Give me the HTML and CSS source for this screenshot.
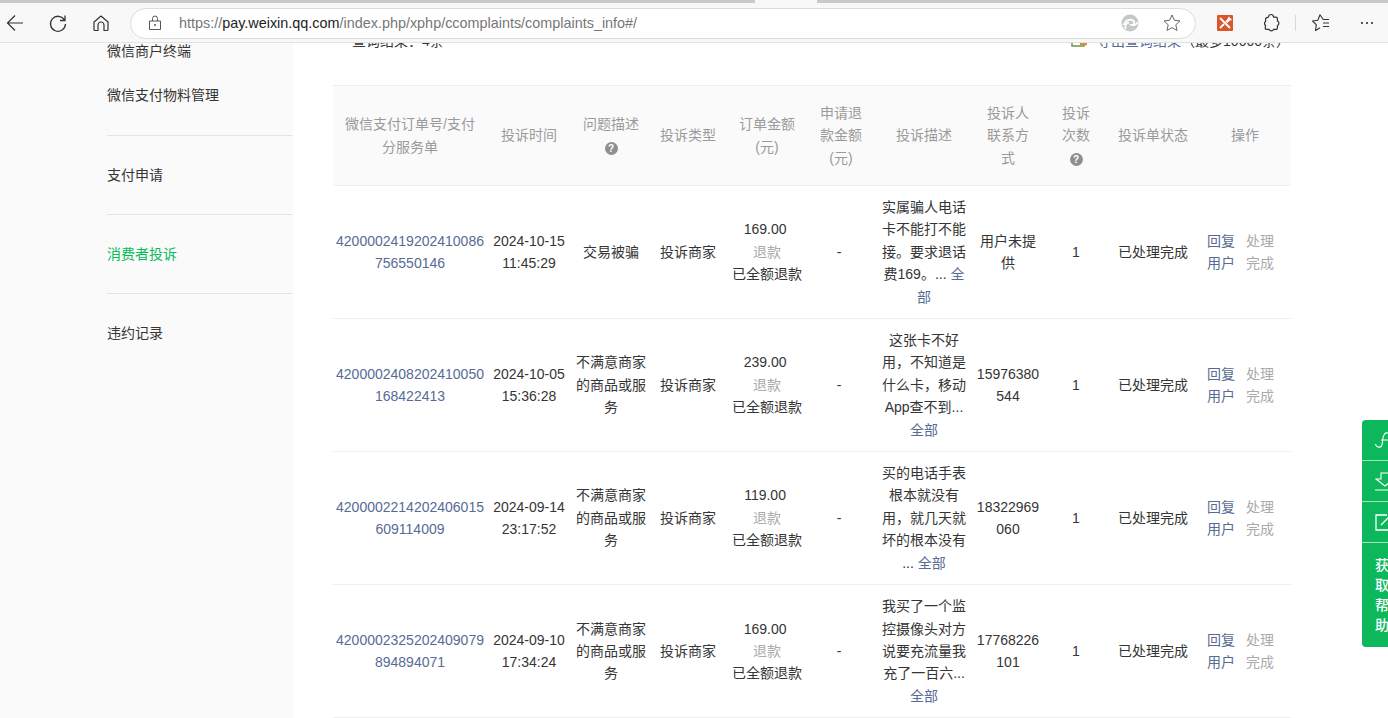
FILE: index.html
```html
<!DOCTYPE html>
<html lang="zh-CN">
<head>
<meta charset="utf-8">
<title>消费者投诉</title>
<link rel="stylesheet" href="styles.css">
</head>
<body>
<header class="browser">
  <div class="tabstrip"><span class="tab-notch"></span></div>
  <div class="toolbar">
    <button class="tb-btn back" aria-label="返回"><svg width="20" height="20" viewBox="0 0 20 20"><path d="M18 10H2.500M10 2.500 2.500 10l7.500 7.500" fill="none" stroke="#333" stroke-width="1.200"/></svg></button>
    <button class="tb-btn reload" aria-label="刷新"><svg width="20" height="20" viewBox="0 0 20 20"><path d="M16.500 7A7.500 7.500 0 1 0 17.500 11M17 2.500V7.500H12" fill="none" stroke="#333" stroke-width="1.300"/></svg></button>
    <button class="tb-btn home" aria-label="主页"><svg width="18" height="18" viewBox="0 0 18 18"><path d="M2 8 9 2l7 6v7.500a1 1 0 0 1-1 1h-3V11a3 3 0 0 0-6 0v5.500H3a1 1 0 0 1-1-1Z" fill="none" stroke="#333" stroke-width="1.200" stroke-linejoin="round"/></svg></button>
    <div class="urlbar">
      <svg class="lock" width="14" height="16" viewBox="0 0 14 16"><path d="M1.500 6h11v8.500h-11ZM4.500 6V3.500a2.500 2.500 0 0 1 5 0V6" fill="none" stroke="#555" stroke-width="1"/><circle cx="7" cy="10" r="1" fill="#555"/></svg>
      <span class="url"><span class="url-dim">https://</span><span class="url-host">pay.weixin.qq.com</span><span class="url-dim">/index.php/xphp/ccomplaints/complaints_info#/</span></span>
      <svg class="refresh-logo" width="18" height="18" viewBox="0 0 18 18"><circle cx="9" cy="9" r="8.500" fill="#c4c8c8"/><path d="M2.500 11C4 6 9 4.500 12 6.500c2 1.500 1.500 4-1 4.500 3 1 5-1 5-3M5 15c-2-3 0-6 3-6.500" fill="none" stroke="#fff" stroke-width="1.800"/></svg>
      <svg class="star" width="20" height="20" viewBox="0 0 20 20"><path d="m10 2 2.400 5.300 5.600.6-4.200 3.900 1.200 5.700L10 14.600l-5 2.900 1.200-5.700L2 7.900l5.600-.6Z" fill="none" stroke="#666" stroke-width="1" stroke-linejoin="round"/></svg>
    </div>
    <div class="ext ext-tool"><svg width="16" height="16" viewBox="0 0 16 16"><path d="M3 3l10 10M3 13 7 9M9 7l2-2 1-2 1.500 1.500-2 1-2 2" fill="none" stroke="#fff" stroke-width="1.800"/></svg></div>
    <button class="tb-btn puzzle" aria-label="扩展"><svg width="20" height="20" viewBox="0 0 20 20"><path d="M7.500 4a2.500 2.500 0 0 1 5 0c0 .6 2.500-.5 3.500.5s0 3.500.5 3.500a2.500 2.500 0 0 1 0 4.500c-.5 0 .5 2.500-.5 3.500s-3.500 0-3.500.5a2.500 2.500 0 0 1-4.500 0c0-.5-2.500.5-3.500-.5s.5-3 0-3.500a2.500 2.500 0 0 1 0-4c.5-.5-.5-2.500.5-3.500S7.500 4.500 7.500 4Z" fill="none" stroke="#333" stroke-width="1.200" stroke-linejoin="round"/></svg></button>
    <span class="tb-sep"></span>
    <button class="tb-btn favs" aria-label="收藏夹"><svg width="20" height="20" viewBox="0 0 20 20"><path d="M12.500 7 9 1.800 6.800 7.300 1.500 8l3.800 3.700L4.500 17.500 9 14.800M12 6.500h6M12 10h6M12 13.500h6" fill="none" stroke="#333" stroke-width="1.100" stroke-linejoin="round"/></svg></button>
    <button class="tb-btn more" aria-label="更多"><i></i><i></i><i></i></button>
  </div>
</header>

<div class="page">
  <nav class="sidebar">
    <div class="nav-group nav-first">
      <a class="nav-item">微信商户终端</a>
      <a class="nav-item">微信支付物料管理</a>
    </div>
    <div class="nav-group"><a class="nav-item">支付申请</a></div>
    <div class="nav-group"><a class="nav-item active">消费者投诉</a></div>
    <div class="nav-group"><a class="nav-item">违约记录</a></div>
  </nav>

  <main class="content">
    <div class="summary">
      <span class="count">查询结果：4条</span>
      <span class="export">
        <svg width="18" height="14" viewBox="0 0 18 14"><path d="M1 1h12v11H1Z" fill="#fff" stroke="#6a9a3a" stroke-width="1.500"/><path d="M9 10h7" stroke="#e08a3a" stroke-width="2.500"/></svg>
        <a class="export-link">导出查询结果</a><span class="export-note">（最多10000条）</span>
      </span>
    </div>

    <table class="grid">
      <colgroup>
        <col class="c1"><col class="c2"><col class="c3"><col class="c4"><col class="c5"><col class="c6"><col class="c7"><col class="c8"><col class="c9"><col class="c10"><col class="c11">
      </colgroup>
      <thead>
        <tr>
          <th>微信支付订单号/支付<br>分服务单</th>
          <th>投诉时间</th>
          <th>问题描述<br><span class="q">?</span></th>
          <th>投诉类型</th>
          <th>订单金额<br>(元)</th>
          <th>申请退<br>款金额<br>(元)</th>
          <th>投诉描述</th>
          <th>投诉人<br>联系方<br>式</th>
          <th>投诉<br>次数<br><span class="q">?</span></th>
          <th>投诉单状态</th>
          <th class="th-op">操作</th>
        </tr>
      </thead>
      <tbody>
        <tr>
          <td><a class="link">4200002419202410086<br>756550146</a></td>
          <td>2024-10-15<br>11:45:29</td>
          <td>交易被骗</td>
          <td>投诉商家</td>
          <td>169.00&nbsp;<br><span class="muted">退款</span><br>已全额退款</td>
          <td>-&nbsp;</td>
          <td>实属骗人电话<br>卡不能打不能<br>接。要求退话<br>费169。... <a class="link">全<br>部</a></td>
          <td>用户未提<br>供</td>
          <td>1</td>
          <td>已处理完成</td>
          <td><div class="actions"><a class="link">回复<br>用户</a><span class="muted">处理<br>完成</span></div></td>
        </tr>
        <tr>
          <td><a class="link">4200002408202410050<br>168422413</a></td>
          <td>2024-10-05<br>15:36:28</td>
          <td>不满意商家<br>的商品或服<br>务</td>
          <td>投诉商家</td>
          <td>239.00&nbsp;<br><span class="muted">退款</span><br>已全额退款</td>
          <td>-&nbsp;</td>
          <td>这张卡不好<br>用，不知道是<br>什么卡，移动<br>App查不到...<br><a class="link">全部</a></td>
          <td>15976380<br>544</td>
          <td>1</td>
          <td>已处理完成</td>
          <td><div class="actions"><a class="link">回复<br>用户</a><span class="muted">处理<br>完成</span></div></td>
        </tr>
        <tr>
          <td><a class="link">4200002214202406015<br>609114009</a></td>
          <td>2024-09-14<br>23:17:52</td>
          <td>不满意商家<br>的商品或服<br>务</td>
          <td>投诉商家</td>
          <td>119.00&nbsp;<br><span class="muted">退款</span><br>已全额退款</td>
          <td>-&nbsp;</td>
          <td>买的电话手表<br>根本就没有<br>用，就几天就<br>坏的根本没有<br>... <a class="link">全部</a></td>
          <td>18322969<br>060</td>
          <td>1</td>
          <td>已处理完成</td>
          <td><div class="actions"><a class="link">回复<br>用户</a><span class="muted">处理<br>完成</span></div></td>
        </tr>
        <tr>
          <td><a class="link">4200002325202409079<br>894894071</a></td>
          <td>2024-09-10<br>17:34:24</td>
          <td>不满意商家<br>的商品或服<br>务</td>
          <td>投诉商家</td>
          <td>169.00&nbsp;<br><span class="muted">退款</span><br>已全额退款</td>
          <td>-&nbsp;</td>
          <td>我买了一个监<br>控摄像头对方<br>说要充流量我<br>充了一百六...<br><a class="link">全部</a></td>
          <td>17768226<br>101</td>
          <td>1</td>
          <td>已处理完成</td>
          <td><div class="actions"><a class="link">回复<br>用户</a><span class="muted">处理<br>完成</span></div></td>
        </tr>
      </tbody>
    </table>
  </main>
</div>

<aside class="float-panel">
  <div class="fp-cell"><svg width="20" height="22" viewBox="0 0 20 22"><path d="M.5 15a3.500 3.500 0 0 0 6 2c2-3 0-8 3-12a3.500 3.500 0 0 1 6 2M6 11h10" fill="none" stroke="#fff" stroke-width="1.100"/></svg></div>
  <div class="fp-cell"><svg width="20" height="22" viewBox="0 0 20 22"><path d="M6 3h8v6h5L10 16 1 9h5ZM0 20h20" fill="none" stroke="#fff" stroke-width="1.100"/></svg></div>
  <div class="fp-cell"><svg width="20" height="22" viewBox="0 0 20 22"><path d="M12 4H1v15h15V9M6 14 16 4" fill="none" stroke="#fff" stroke-width="1.300"/></svg></div>
  <div class="fp-text">获<br>取<br>帮<br>助</div>
</aside>
</body>
</html>
```
FILE: styles.css
```css
* { box-sizing: border-box; }
html, body { height: 100%; }
body {
  margin: 0;
  overflow: hidden;
  display: flex;
  flex-direction: column;
  background: #fff;
  color: #353535;
  font: 14px/22.4px "Liberation Sans", "Noto Sans CJK SC", sans-serif;
}
a { text-decoration: none; }

/* browser chrome */
.browser { flex: none; height: 43px; background: #f8f8f8; border-bottom: 1px solid #e2e2e2; position: relative; z-index: 2; }
.tabstrip { height: 3px; background: #c9c9c9; display: flex; justify-content: flex-start; padding-left: 755px; }
.tab-notch { width: 62px; height: 3px; background: #f8f8f8; }
.toolbar { height: 39px; display: flex; align-items: center; padding-top: 1px; }
.tb-btn { border: 0; padding: 0; background: none; display: flex; align-items: center; justify-content: center; flex: none; }
.back { width: 20px; margin-left: 5px; }
.reload { width: 20px; margin-left: 23px; }
.home { width: 18px; margin-left: 24px; }
.urlbar {
  width: 1066px; height: 31px; margin-left: 20px; flex: none;
  display: flex; align-items: center;
  background: #fff; border: 1px solid #dcdcdc; border-radius: 16px;
}
.lock { margin-left: 17px; flex: none; }
.url { margin-left: 17px; flex: 1; font-size: 14.400px; white-space: nowrap; color: #777; }
.url-host { color: #222; }
.refresh-logo { flex: none; margin-right: 23px; }
.star { flex: none; margin-right: 13px; }
.ext { flex: none; }
.ext-tool { width: 16px; height: 16px; margin-left: 21px; background: #d9572b; border-radius: 1px; display: flex; }
.puzzle { width: 20px; margin-left: 28px; }
.tb-sep { width: 1px; height: 16px; background: #d8d8d8; margin-left: 14px; flex: none; }
.favs { width: 20px; margin-left: 15px; }
.more { width: 14px; margin-left: 29px; gap: 3px; }
.more i { width: 2px; height: 2px; background: #222; border-radius: 50%; }

/* page */
.page { flex: 1; min-height: 0; display: flex; overflow: hidden; }
.sidebar { width: 293px; flex: none; background: #fafafa; padding-left: 107px; }
.nav-group { border-top: 1px solid #e5e5e5; padding: 28px 0; }
.nav-first { border-top: 0; padding: 0 0 29px; margin-top: -3px; }
.nav-item { display: block; height: 22px; line-height: 22px; color: #353535; }
.nav-first .nav-item + .nav-item { margin-top: 22px; }
.nav-item.active { color: #09bb5a; }

.content { flex: 1; min-width: 0; padding: 0 97px 0 40px; }
.summary { height: 55px; margin-top: -13px; display: flex; justify-content: space-between; padding: 0 1px 0 19px; }
.summary > span { display: flex; align-items: center; height: 22px; }
.export svg { margin-right: 8px; }
.export-link { color: #576b95; }

/* table */
.grid { width: 958px; table-layout: fixed; border-collapse: collapse; text-align: center; }
.c1 { width: 154px; } .c2 { width: 84px; } .c3 { width: 80px; } .c4 { width: 74px; }
.c5 { width: 84px; } .c6 { width: 64px; } .c7 { width: 102px; } .c8 { width: 66px; }
.c9 { width: 70px; } .c10 { width: 84px; } .c11 { width: 96px; }
.grid th {
  height: 100px; padding: 0; font-weight: 400; color: #9a9a9a;
  background: #fafafa; border-top: 1px solid #eee; border-bottom: 1px solid #eee;
}
.grid .th-op { padding-left: 4px; }
.grid td { height: 133px; padding: 10px 0; border-bottom: 1px solid #eee; }
.link { color: #576b95; }
.muted { color: #aaa; }
.q {
  display: inline-block; width: 13px; height: 13px; border-radius: 50%;
  background: #8f8f8f; color: #fff; font-size: 10px; font-weight: 700; line-height: 13px; vertical-align: 0;
}
.actions { display: flex; gap: 11px; padding-left: 12px; }

/* floating panel */
.float-panel {
  position: fixed; left: 1362px; top: 420px; width: 44px; height: 227px;
  background: #0cb85b; border-radius: 4px 0 0 4px; color: #fff; z-index: 3;
}
.fp-cell { height: 41px; border-bottom: 1px solid #a5e3c0; padding: 9px 0 0 13px; display: flex; }
.fp-text { padding: 12px 0 0 13px; line-height: 20px; font-size: 14px; font-weight: 500; }
```
